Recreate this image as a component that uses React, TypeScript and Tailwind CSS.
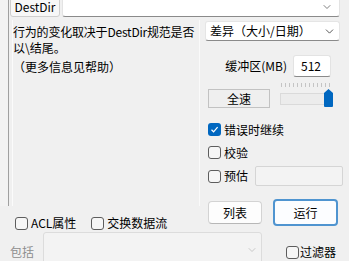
import { ChevronDown } from 'lucide-react';

const font = { fontFamily: '"Noto Sans CJK SC", "Noto Sans", sans-serif' };

function Check({ checked = false }: { checked?: boolean }) {
  if (checked) {
    return (
      <span className="w-[13px] h-[13px] shrink-0 rounded-[3px] bg-[#0067c0] flex items-center justify-center">
        <svg width="9" height="9" viewBox="0 0 9 9">
          <path d="M1.5 4.8 L3.6 6.8 L7.6 2.2" fill="none" stroke="#fff" strokeWidth="1.2" />
        </svg>
      </span>
    );
  }
  return <span className="w-[13px] h-[13px] shrink-0 rounded-[3px] border border-[#5d5d5d] bg-[#f6f6f6]" />;
}

function Slider() {
  const ticks = Array.from({ length: 13 }, (_, i) => 1 + i * 4);
  return (
    <svg width="57" height="25" viewBox="0 0 57 25">
      {ticks.map((x) => (
        <line key={x} x1={x + 0.5} y1="0" x2={x + 0.5} y2="4" stroke="#c4c4c4" />
      ))}
      <rect x="0.5" y="10.5" width="50" height="11" fill="#ececec" stroke="#dadada" />
      <path d="M44 10 L48.5 6 L53 10 L53 23 Q53 24 52 24 L45 24 Q44 24 44 23 Z" fill="#0067c0" />
    </svg>
  );
}

export default function App() {
  return (
    <div
      className="w-[349px] h-[261px] overflow-hidden bg-[#f0f0f0] text-[12px] leading-[16px] text-black flex flex-col"
      style={font}
    >
      <div className="flex mt-[-4px]">
        <div className="w-[9px] h-[210px] shrink-0 border-r border-[#a0a0a0] bg-[#f3f3f3]" />
        <div className="flex-1 flex flex-col">
          <div className="flex h-[21px] gap-[2px] ml-[1px]">
            <div className="w-[50px] border border-[#cfcfcf] rounded-b-[3px] bg-[#f7f7f7] flex items-end justify-center pb-[1px]">
              DestDir
            </div>
            <div className="w-[278px] bg-white border border-[#e3e3e3] border-b-[#8a8a8a] rounded-b-[3px] flex items-center justify-end pr-[6px]">
              <ChevronDown size={12} strokeWidth={1.5} className="text-[#555]" />
            </div>
          </div>
          <div className="flex mt-[3px]">
            <div className="w-[191px] flex flex-col">
              <div className="ml-[3px] h-[186px] border-l border-l-[#fbfbfb] border-r border-r-[#fafafa] pt-[4px] whitespace-nowrap leading-[16px]">
                <div className="tracking-[-0.2px]">行为的变化取决于DestDir规范是否</div>
                <div>以\结尾。</div>
                <div className="mt-[3px]">（更多信息见帮助）</div>
              </div>
              <div className="flex items-center mt-[10px] pl-[6px] h-[14px] whitespace-nowrap">
                <Check />
                <span className="ml-[3px]">ACL属性</span>
                <span className="ml-[15px] flex items-center">
                  <Check />
                  <span className="ml-[3px]">交换数据流</span>
                </span>
              </div>
            </div>
            <div className="ml-[5px] w-[135px] flex flex-col whitespace-nowrap">
              <div className="h-[20px] bg-white border border-[#e5e5e5] border-b-[#8a8a8a] rounded-[3px] flex items-center justify-between pl-[4px] pr-[3px] mt-[1px]">
                <span>差异（大小/日期）</span>
                <ChevronDown size={13} strokeWidth={1.5} className="text-[#333]" />
              </div>
              <div className="flex items-center justify-end mt-[14px] pr-[9px] gap-[6px]">
                <span>缓冲区(MB)</span>
                <div className="w-[38px] h-[22px] bg-white border border-[#e3e3e3] border-b-[#8a8a8a] rounded-[3px] flex items-center pl-[7px]">
                  512
                </div>
              </div>
              <div className="flex items-end mt-[6px] h-[25px]">
                <div className="ml-[3px] w-[62px] h-[19px] border border-[#c2c2c2] bg-[#efefef] flex items-center justify-center">
                  全速
                </div>
                <div className="ml-[10px]">
                  <Slider />
                </div>
              </div>
              <div className="flex items-center mt-[15px] ml-[3px] h-[13px]">
                <Check checked />
                <span className="ml-[3px]">错误时继续</span>
              </div>
              <div className="flex items-center mt-[10px] ml-[3px] h-[13px]">
                <Check />
                <span className="ml-[3px]">校验</span>
              </div>
              <div className="flex items-center mt-[7px] ml-[3px] h-[20px]">
                <Check />
                <span className="ml-[3px] shrink-0">预估</span>
                <div className="ml-[7px] w-[88px] shrink-0 h-[20px] border border-[#d5d5d5] bg-[#f3f3f3] rounded-[2px]" />
              </div>
              <div className="flex items-center mt-[13px] ml-[3px]">
                <div className="w-[54px] h-[23px] rounded-[4px] bg-[#fdfdfd] border border-[#d3d3d3] border-b-[#b7b7b7] flex items-center justify-center">
                  列表
                </div>
                <div className="ml-[11px] w-[65px] h-[27px] rounded-[4px] bg-[#fcfdff] border-2 border-[#4f94d0] flex items-center justify-center">
                  运行
                </div>
              </div>
            </div>
          </div>
        </div>
      </div>
      <div className="flex items-start mt-[2px] pl-[10px] whitespace-nowrap">
        <span className="text-[#8d8d8d] mt-[12px]">包括</span>
        <div className="ml-[9px] w-[219px] h-[32px] border border-[#dcdcdc] bg-[#f3f3f3] rounded-[3px] flex items-start justify-end pt-[11px] pr-[3px]">
          <ChevronDown size={12} strokeWidth={1.5} className="text-[#b9b9b9]" />
        </div>
        <div className="flex items-center ml-[24px] mt-[12px]">
          <Check />
          <span className="ml-[1px]">过滤器</span>
        </div>
      </div>
    </div>
  );
}
